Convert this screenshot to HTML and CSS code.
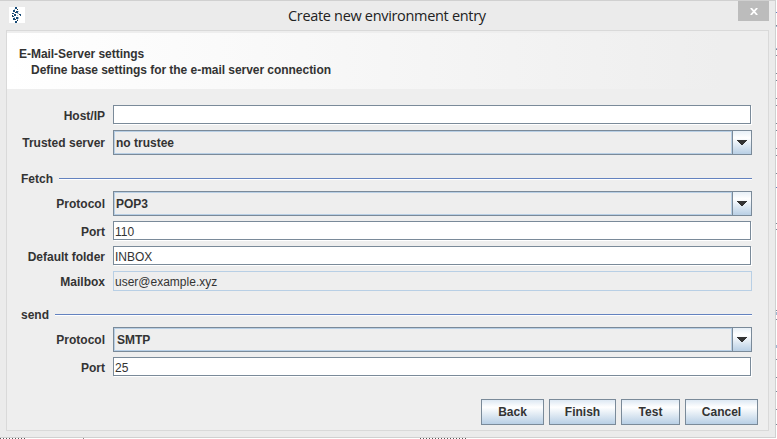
FILE: index.html
```html
<!DOCTYPE html>
<html lang="en">
<head>
<meta charset="utf-8">
<title>Create new environment entry</title>
<link rel="stylesheet" href="styles.css">
</head>
<body>
<main class="window">
  <header class="titlebar">
    <svg class="app-icon" width="16" height="16" viewBox="0 0 16 16" shape-rendering="crispEdges">
      <path fill="#fff" d="M0 0h16v16H0z"/>
      <path fill="#174b78" d="M6 0h2v2H6zM4 3h2v2H4zM7 4h2v2H7zM3 6h2v1H3zM5 7h2v2H5zM3 9h2v1H3zM4 11h2v2H4zM7 10h2v2H7zM6 14h2v2H6zM11 7h1v2h-1z"/>
      <path fill="#273640" d="M8 2h1v1H8zM6 5h1v1H6zM3 8h1v1H3zM6 12h1v1H6zM8 13h1v1H8zM10 7h1v1h-1z"/>
      <path fill="#9cb9cb" d="M5 2h1v1H5zM8 6h2v1H8zM9 4h1v1H9zM8 8h1v1H8zM9 10h1v2H9zM5 10h1v1H5zM8 12h1v1H8z"/>
    </svg>
    <h1 class="title">Create new environment entry</h1>
    <button class="close" aria-label="Close"><svg width="8" height="7" viewBox="0 0 8 7"><path d="M.8 0 7.2 7M7.2 0 .8 7" stroke="#fff" stroke-width="1.8"/></svg></button>
  </header>
  <section class="content">
    <div class="banner">
      <h2 class="heading">E-Mail-Server settings</h2>
      <p class="description">Define base settings for the e-mail server connection</p>
    </div>
    <form class="form">
      <div class="row"><label>Host/IP</label><div class="input"></div></div>
      <div class="row combo-row"><label>Trusted server</label><div class="combo"><span class="value">no trustee</span><span class="arrow"><svg width="10" height="5" viewBox="0 0 10 5" shape-rendering="crispEdges"><path d="M0 0h10v1H9v1H8v1H7v1H6v1H4V4H3V3H2V2H1V1H0z" fill="#333"/></svg></span></div></div>
      <div class="separator"><span>Fetch</span><i></i></div>
      <div class="row combo-row"><label>Protocol</label><div class="combo"><span class="value">POP3</span><span class="arrow"><svg width="10" height="5" viewBox="0 0 10 5" shape-rendering="crispEdges"><path d="M0 0h10v1H9v1H8v1H7v1H6v1H4V4H3V3H2V2H1V1H0z" fill="#333"/></svg></span></div></div>
      <div class="row"><label>Port</label><div class="input">110</div></div>
      <div class="row"><label>Default folder</label><div class="input">INBOX</div></div>
      <div class="row"><label>Mailbox</label><div class="input disabled">user@example.xyz</div></div>
      <div class="separator"><span>send</span><i></i></div>
      <div class="row combo-row"><label>Protocol</label><div class="combo smtp"><span class="value">SMTP</span><span class="arrow"><svg width="10" height="5" viewBox="0 0 10 5" shape-rendering="crispEdges"><path d="M0 0h10v1H9v1H8v1H7v1H6v1H4V4H3V3H2V2H1V1H0z" fill="#333"/></svg></span></div></div>
      <div class="row"><label>Port</label><div class="input">25</div></div>
    </form>
    <footer class="actions">
      <button class="btn back">Back</button>
      <button class="btn finish">Finish</button>
      <button class="btn test">Test</button>
      <button class="btn cancel">Cancel</button>
    </footer>
  </section>
</main>
<svg class="behind-right" width="1" height="439" shape-rendering="crispEdges">
  <path stroke="#7a8a99" stroke-width="1" d="M.5 25v1M.5 49v1M.5 55v1M.5 73v1M.5 80v1M.5 98v1M.5 105v1M.5 123v1M.5 130v1M.5 148v1M.5 155v1M.5 173v1M.5 223v1M.5 229v1M.5 310v1M.5 319v1M.5 359v1M.5 377v1M.5 391v1M.5 409v1M.5 424v1"/>
  <path stroke="#6382bf" d="M.5 12v1M.5 187v1"/>
  <path stroke="#9db9d5" d="M.5 26v1M.5 48v1M.5 312v3M.5 345v3"/>
</svg>
<svg class="behind-bottom" width="777" height="1" shape-rendering="crispEdges">
  <path stroke="#555" stroke-dasharray="1 2" d="M0 .5h27M420 .5h46"/>
  <path stroke="#888" d="M83 .5h1"/>
</svg>
</body>
</html>
```

FILE: styles.css
```css
* { box-sizing: border-box; }
body {
  margin: 0;
  width: 777px;
  height: 439px;
  overflow: hidden;
  background: #fff;
  color: #333;
  font: bold 12px/14px "Liberation Sans", Arial, sans-serif;
}
.window {
  width: 776px;
  height: 438px;
  padding-left: 6px;
  background: #ebebeb;
  border: solid #d0d0d0;
  border-width: 1px 1px 1px 0;
}
.titlebar {
  height: 29px;
  display: flex;
  align-items: flex-start;
}
.app-icon { margin: 6px 0 0 3px; flex: none; }
.title {
  margin: 4px 0 0 263px;
  width: 450px;
  color: #222;
  font: 14.5px/21px "Open Sans", sans-serif;
  letter-spacing: -0.32px;
  white-space: nowrap;
}
.close {
  display: flex;
  align-items: center;
  justify-content: center;
  flex: none;
  width: 31px;
  height: 20px;
  padding: 1px 0 0 1px;
  border: 0;
  background: #bcbcbc;
}
.content {
  width: 763px;
  height: 401px;
  border: 1px solid #d9d9d9;
  background: #eee;
  padding-top: 2px;
}
.banner {
  height: 56px;
  padding: 14px 12px 0;
  background: linear-gradient(90deg, #fff, #eee 94%);
  letter-spacing: -0.04px;
}
.heading, .description { margin: 0; font: inherit; white-space: nowrap; }
.description { padding: 2px 0 0 12px; }
.form { padding: 16px 0 0 14px; }
.row {
  display: grid;
  grid-template-columns: 84px 639px;
  column-gap: 8px;
  height: 20px;
  margin-bottom: 5px;
}
.row label {
  text-align: right;
  align-self: center;
  white-space: nowrap;
  padding-top: 1px;
}
.combo-row { height: 25px; }
.combo-row label { padding-top: 0; }
.input {
  width: 638px;
  height: 19px;
  padding: 3px 1px 0;
  border: 1px solid #7a8a99;
  background: #fff;
  box-shadow: 1px 1px #fff;
  font-weight: normal;
}
.input.disabled {
  width: 639px;
  height: 20px;
  background: #eee;
  border-color: #b8cfe5;
  box-shadow: none;
}
.combo {
  display: flex;
  height: 25px;
  border: 1px solid #7a8a99;
}
.value {
  flex: 1;
  padding: 4px 1px 0;
  border: 1px solid #b8cfe5;
}
.smtp .value { padding-left: 2px; }
.arrow {
  width: 19px;
  border-left: 1px solid #7a8a99;
  display: flex;
  align-items: center;
  justify-content: center;
  background: linear-gradient(#e8f0f7, #fff 30%, #b8cfe5);
}
.separator {
  display: flex;
  align-items: center;
  gap: 6px;
  width: 731px;
  height: 14px;
  margin: 17px 0 5px;
}
.separator i {
  flex: 1;
  height: 2px;
  background: linear-gradient(#6382bf 50%, #fff 50%);
}
.actions {
  display: flex;
  justify-content: flex-end;
  gap: 5px;
  padding: 17px 10px 0 0;
}
.btn {
  height: 26px;
  padding: 0;
  border: 1px solid #7a8a99;
  color: #333;
  background: linear-gradient(#dde8f3, #fff 30%, #b8cfe5);
  font: inherit;
}
.back { width: 63px; }
.finish { width: 67px; }
.test { width: 59px; }
.cancel { width: 73px; }
.behind-right { position: absolute; left: 776px; top: 0; }
.behind-bottom { position: absolute; left: 0; top: 438px; }
```
